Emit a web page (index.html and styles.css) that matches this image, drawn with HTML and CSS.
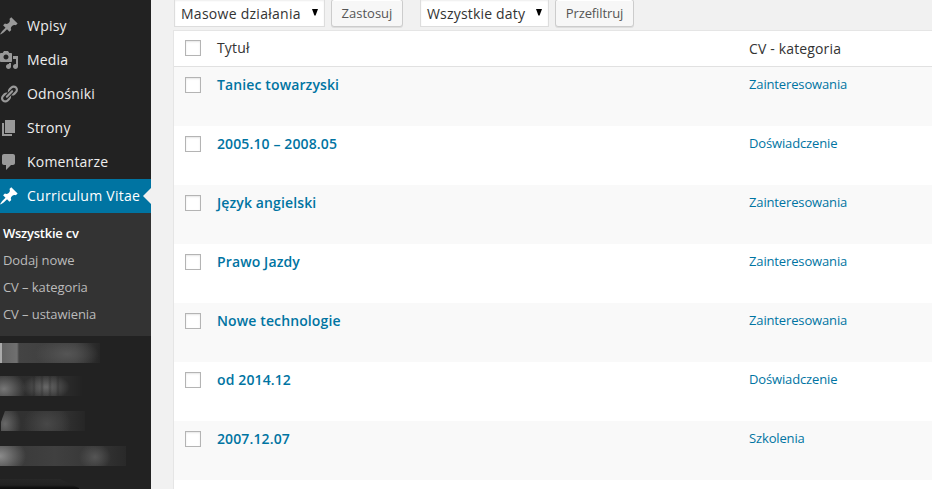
FILE: index.html
```html
<!DOCTYPE html>
<html lang="pl">
<head>
<meta charset="utf-8">
<title>Curriculum Vitae</title>
<link rel="stylesheet" href="styles.css">
</head>
<body>
<aside class="sidebar">
  <nav class="menu">
    <a class="item"><svg viewBox="0 0 20 20"><path d="M10.44 3.02l1.82-1.82 6.36 6.35-1.83 1.82c-1.05-.68-2.48-.57-3.41.36l-.75.75c-.92.93-1.04 2.35-.35 3.41l-1.83 1.82-2.41-2.41-2.8 2.79c-.42.42-3.38 2.71-3.8 2.29s1.86-3.39 2.28-3.81l2.79-2.79L4.1 9.36l1.83-1.82c1.05.69 2.48.57 3.4-.36l.75-.75c.93-.92 1.05-2.35.36-3.41z"/></svg><span>Wpisy</span></a>
    <a class="item"><svg viewBox="0 0 20 20"><path d="M13 11V4c0-.55-.45-1-1-1h-1.67L9 1H5L3.67 3H2c-.55 0-1 .45-1 1v7c0 .55.45 1 1 1h10c.55 0 1-.45 1-1zM7 4.5c1.38 0 2.5 1.12 2.5 2.5S8.38 9.5 7 9.5 4.5 8.38 4.5 7 5.62 4.5 7 4.5zM14 6h5v10.5c0 1.38-1.12 2.5-2.5 2.5S14 17.88 14 16.5s1.12-2.5 2.5-2.5c.17 0 .34.02.5.05V9h-3V6zm-4 8.05V13h2v3.5c0 1.38-1.12 2.5-2.5 2.5S7 17.88 7 16.5 8.12 14 9.5 14c.17 0 .34.02.5.05z"/></svg><span>Media</span></a>
    <a class="item"><svg viewBox="0 0 20 20"><path d="M17.74 2.76c1.68 1.69 1.68 4.41 0 6.1l-1.53 1.52c-1.12 1.12-2.7 1.47-4.14 1.09l2.62-2.61.76-.77.76-.76c.84-.84.84-2.2 0-3.04-.84-.85-2.2-.85-3.04 0l-.77.76-3.38 3.38c-.37-1.44-.02-3.02 1.1-4.14l1.52-1.53c1.69-1.68 4.42-1.68 6.1 0zM8.59 13.43l5.34-5.34c.42-.42.42-1.1 0-1.52-.44-.43-1.13-.39-1.53 0l-5.33 5.34c-.42.42-.42 1.1 0 1.52.44.43 1.13.39 1.52 0zm-.76 2.29l4.14-4.15c.38 1.44.03 3.02-1.09 4.14l-1.52 1.53c-1.69 1.68-4.41 1.68-6.1 0-1.68-1.68-1.68-4.42 0-6.1l1.53-1.52c1.12-1.12 2.7-1.47 4.14-1.1l-4.14 4.15c-.85.84-.85 2.2 0 3.05.84.84 2.2.84 3.04 0z"/></svg><span>Odnośniki</span></a>
    <a class="item"><svg viewBox="0 0 20 20"><path d="M6 15V2h10v13H6zm-1 1h8v2H3V5h2v11z"/></svg><span>Strony</span></a>
    <a class="item"><svg viewBox="0 0 20 20"><path d="M5 2h9c1.1 0 2 .9 2 2v7c0 1.1-.9 2-2 2h-2l-5 5v-5H5c-1.1 0-2-.9-2-2V4c0-1.1.9-2 2-2z"/></svg><span>Komentarze</span></a>
    <a class="item current"><svg viewBox="0 0 20 20"><path d="M10.44 3.02l1.82-1.82 6.36 6.35-1.83 1.82c-1.05-.68-2.48-.57-3.41.36l-.75.75c-.92.93-1.04 2.35-.35 3.41l-1.83 1.82-2.41-2.41-2.8 2.79c-.42.42-3.38 2.71-3.8 2.29s1.86-3.39 2.28-3.81l2.79-2.79L4.1 9.36l1.83-1.82c1.05.69 2.48.57 3.4-.36l.75-.75c.93-.92 1.05-2.35.36-3.41z"/></svg><span>Curriculum Vitae</span></a>
  </nav>
  <nav class="submenu">
    <a class="active">Wszystkie cv</a>
    <a>Dodaj nowe</a>
    <a>CV – kategoria</a>
    <a>CV – ustawienia</a>
  </nav>
  <div class="hidden-items">
    <div class="smudge s1"></div>
    <div class="smudge s2"></div>
    <div class="smudge s3"></div>
    <div class="smudge s4"></div>
    <div class="smudge s5"></div>
  </div>
</aside>
<main class="content">
  <div class="toolbar">
    <div class="select bulk"><span>Masowe działania</span><svg class="arrow" viewBox="0 0 6 7"><path d="M0 0h6L3.6 6.5H2.4z"/></svg></div>
    <div class="button apply">Zastosuj</div>
    <div class="select dates"><span>Wszystkie daty</span><svg class="arrow" viewBox="0 0 6 7"><path d="M0 0h6L3.6 6.5H2.4z"/></svg></div>
    <div class="button filter">Przefiltruj</div>
  </div>
  <div class="table">
    <div class="row head"><i class="check"></i><span class="title">Tytuł</span><span class="cat">CV - kategoria</span></div>
    <div class="row alt"><i class="check"></i><a class="title">Taniec towarzyski</a><a class="cat">Zainteresowania</a></div>
    <div class="row"><i class="check"></i><a class="title">2005.10 – 2008.05</a><a class="cat">Doświadczenie</a></div>
    <div class="row alt"><i class="check"></i><a class="title">Język angielski</a><a class="cat">Zainteresowania</a></div>
    <div class="row"><i class="check"></i><a class="title">Prawo Jazdy</a><a class="cat">Zainteresowania</a></div>
    <div class="row alt"><i class="check"></i><a class="title">Nowe technologie</a><a class="cat">Zainteresowania</a></div>
    <div class="row"><i class="check"></i><a class="title">od 2014.12</a><a class="cat">Doświadczenie</a></div>
    <div class="row alt"><i class="check"></i><a class="title">2007.12.07</a><a class="cat">Szkolenia</a></div>
  </div>
</main>
</body>
</html>
```
FILE: styles.css
```css
* { box-sizing: border-box; }
body {
  margin: 0;
  width: 932px;
  height: 489px;
  overflow: hidden;
  display: flex;
  background: #f1f1f1;
  font-family: "Open Sans", sans-serif;
  font-size: 14px;
}
.sidebar {
  width: 151px;
  flex: none;
  height: 489px;
  overflow: hidden;
  background: #222;
}
.menu { padding-top: 9px; }
.item {
  position: relative;
  display: flex;
  align-items: center;
  gap: 8px;
  height: 34px;
  color: #eee;
  line-height: 18px;
  letter-spacing: .2px;
  white-space: nowrap;
}
.item svg {
  width: 20px;
  height: 20px;
  flex: none;
  margin-left: -1px;
  fill: #999;
}
.item.current { background: #0074a2; color: #fff; letter-spacing: .27px; }
.item.current svg { fill: #fff; }
.item.current::after {
  content: "";
  position: absolute;
  right: 0;
  top: 9px;
  border: 8px solid transparent;
  border-left: 0;
  border-right-color: #f1f1f1;
}
.submenu {
  height: 123px;
  padding: 7px 3px;
  background: #333;
  font-size: 13px;
}
.submenu a {
  display: block;
  height: 27px;
  line-height: 27px;
  color: #bbb;
  letter-spacing: -.08px;
}
.submenu .active { color: #fff; font-weight: 600; letter-spacing: -.25px; }
.hidden-items { padding-top: 7px; }
.smudge { height: 20px; }
.s1 {
  width: 100px;
  margin-bottom: 13px;
  background:
    radial-gradient(ellipse 32px 16px at 67px 11px, #555, transparent),
    linear-gradient(90deg, #aaa 0 2px, #636363 2px, #707070 17px, #444 19px, #3d3d3d 75px, #262626);
}
.s2 {
  width: 83px;
  margin-bottom: 15px;
  background:
    repeating-linear-gradient(90deg, transparent 0 4px, rgba(34, 34, 34, .35) 6px, transparent 8px) 28px 0 / 34px 20px no-repeat,
    radial-gradient(ellipse 24px 13px at 46px 11px, #686868, transparent),
    radial-gradient(ellipse 22px 18px at 4px 13px, #777, transparent),
    linear-gradient(90deg, #2c2c2c, #303030 55px, #222);
}
.s3 {
  width: 85px;
  margin-bottom: 15px;
  background:
    radial-gradient(ellipse 24px 20px at 47px 13px, #484848, transparent),
    radial-gradient(ellipse 16px 20px at 5px 13px, #686868, transparent),
    linear-gradient(90deg, #303030, #333 60px, #262626);
  clip-path: polygon(5px 0, 100% 0, 100% 100%, 1px 100%, 1px 11px);
}
.s4 {
  width: 126px;
  margin-bottom: 13px;
  background:
    radial-gradient(ellipse 16px 14px at 95px 11px, #555, transparent),
    radial-gradient(ellipse 26px 20px at 0 10px, #8c8c8c, transparent),
    linear-gradient(90deg, #383838, #404040 55px, #383838 90px, #292929);
}
.s5 {
  width: 79px;
  height: 10px;
  background: linear-gradient(#272727, #222 6px, #0e0e0e 9px);
  clip-path: polygon(0 0, 60px 0, 79px 9px, 79px 10px, 0 10px);
}
.content { flex: 1; min-width: 0; padding-left: 22px; }
.toolbar { display: flex; height: 30px; padding-left: 1px; }
.select {
  display: flex;
  align-items: center;
  justify-content: space-between;
  height: 28px;
  margin-top: -1px;
  padding: 0 6px;
  border: 1px solid #ddd;
  background: #fff;
  box-shadow: inset 0 1px 2px rgba(0, 0, 0, .07);
  color: #333;
  letter-spacing: .27px;
  white-space: nowrap;
}
.arrow { width: 6px; height: 7px; margin-bottom: 1px; fill: #000; }
.bulk { width: 151px; }
.dates { width: 129px; letter-spacing: .18px; }
.button {
  height: 28px;
  margin-top: -1px;
  border: 1px solid #ccc;
  border-radius: 3px;
  background: #f7f7f7;
  box-shadow: inset 0 1px 0 #fff, 0 1px 0 rgba(0, 0, 0, .08);
  color: #555;
  font-size: 13px;
  line-height: 26px;
  text-align: center;
}
.apply { width: 72px; margin-left: 6px; margin-right: 17px; }
.filter { width: 79px; margin-left: 6px; letter-spacing: -.1px; }
.table {
  height: 459px;
  border: 1px solid #e5e5e5;
  border-width: 1px 0 0 1px;
  background: #fff;
}
.row {
  display: grid;
  grid-template-columns: 32px 532px 1fr;
  align-items: start;
  height: 59px;
  padding: 9px 0 0 11px;
}
.alt { background: #f9f9f9; }
.head {
  height: 36px;
  border-bottom: 1px solid #e1e1e1;
  color: #333;
  letter-spacing: .15px;
}
.check {
  width: 16px;
  height: 16px;
  margin-top: 1px;
  border: 1px solid #b4b4b4;
  background: #fff;
  box-shadow: inset 0 1px 2px rgba(0, 0, 0, .1);
}
.title { line-height: 18px; }
.cat { line-height: 18px; }
a.title { color: #0074a2; font-weight: 600; letter-spacing: .12px; }
a.cat {
  margin-top: -1px;
  color: #0074a2;
  font-size: 13px;
  letter-spacing: -.14px;
}
.head .check { margin-top: 0; }
.head .title { margin-top: -1px; }
```
